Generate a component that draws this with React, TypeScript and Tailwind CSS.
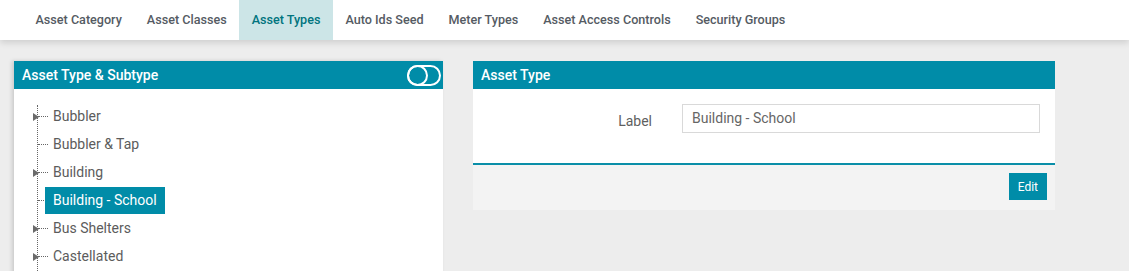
import React from "react";

const tabs = ["Asset Category", "Asset Classes", "Asset Types", "Auto Ids Seed", "Meter Types", "Asset Access Controls", "Security Groups"];

const tree = [
  { label: "Bubbler", expandable: true },
  { label: "Bubbler & Tap", expandable: false },
  { label: "Building", expandable: true },
  { label: "Building - School", expandable: false, selected: true },
  { label: "Bus Shelters", expandable: true },
  { label: "Castellated", expandable: true },
];

function ToggleIcon() {
  return (
    <svg width="34" height="21" viewBox="0 0 34 21" fill="none">
      <rect x="1" y="1" width="32" height="19" rx="9.5" stroke="white" strokeWidth="2" />
      <circle cx="10.5" cy="10.5" r="9.5" stroke="white" strokeWidth="2" />
    </svg>
  );
}

export default function App() {
  return (
    <div className="w-[1129px] h-[271px] overflow-hidden bg-[#ededed] font-['Roboto',sans-serif]">
      <nav className="h-[40px] bg-white flex pl-[23px] shadow-[0_3px_6px_rgba(0,0,0,0.12)] relative z-10">
        {tabs.map((t) => (
          <div
            key={t}
            className={
              "px-[12.5px] pt-[1px] flex items-center text-[12.6px] font-medium " +
              (t === "Asset Types" ? "bg-[#cce5e7] text-[#00747e]" : "text-[#555b63]")
            }
          >
            {t}
          </div>
        ))}
      </nav>

      <div className="flex gap-[30px] pl-[14px] pt-[21px]">
        <section className="w-[429px] h-[300px] bg-white shadow-[-2px_0_4px_rgba(0,0,0,0.15)]">
          <div className="h-[28px] bg-[#008ca8] flex items-center justify-between pl-[8px] pr-[2px]">
            <h3 className="text-white text-[14px] font-medium">Asset Type &amp; Subtype</h3>
            <ToggleIcon />
          </div>
          <ul className="relative pt-[13px] pl-[20px]">
            <div className="absolute left-[23px] top-[16px] h-[200px] border-l border-dotted border-[#666]" />
            {tree.map((n) => (
              <li key={n.label} className="h-[28px] flex items-center relative">
                {n.expandable && (
                  <span className="absolute left-[-1px] top-[11px] w-0 h-0 border-y-[4px] border-y-transparent border-l-[6px] border-l-[#6a6a6a]" />
                )}
                <span className="w-[10px] ml-[4px] border-t border-dotted border-[#666]" />
                <span
                  className={
                    "ml-[-3px] px-[8px] h-[27px] flex items-center text-[14px] " +
                    (n.selected ? "bg-[#008ca8] text-white" : "text-[#5c5c5c]")
                  }
                >
                  {n.label}
                </span>
              </li>
            ))}
          </ul>
        </section>

        <section className="w-[582px] h-[149px] bg-white flex flex-col">
          <div className="h-[28px] bg-[#008ca8] flex items-center pl-[8px]">
            <h3 className="text-white text-[14px] font-medium">Asset Type</h3>
          </div>
          <div className="h-[76px] flex items-start pt-[15px] border-b-2 border-[#0a8ea8]">
            <label className="w-[209px] text-right pr-[30px] pt-[7px] text-[14px] text-[#5f5f5f]">Label</label>
            <div className="w-[358px] h-[29px] border border-[#d9d9d9] flex items-center px-[9px] text-[14px] font-normal text-[#666]">
              Building - School
            </div>
          </div>
          <div className="flex-1 bg-[#f3f3f3] flex justify-end items-start pt-[8px] pr-[8px]">
            <button className="h-[27px] px-[9px] bg-[#008ca8] text-white text-[12px]">Edit</button>
          </div>
        </section>
      </div>
    </div>
  );
}
